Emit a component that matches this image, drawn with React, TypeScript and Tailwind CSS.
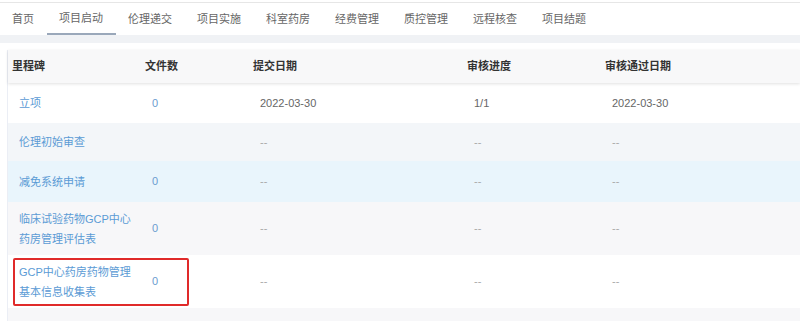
import React from 'react'

const tabs = ['首页', '项目启动', '伦理递交', '项目实施', '科室药房', '经费管理', '质控管理', '远程核查', '项目结题']

type Row = {
  name: string[]
  files: string
  submit: string
  progress: string
  passed: string
  h: string
  bg: string
}

const rows: Row[] = [
  { name: ['立项'], files: '0', submit: '2022-03-30', progress: '1/1', passed: '2022-03-30', h: 'h-[40px]', bg: 'bg-white' },
  { name: ['伦理初始审查'], files: '', submit: '--', progress: '--', passed: '--', h: 'h-[38px]', bg: 'bg-[#f3f6f9]' },
  { name: ['减免系统申请'], files: '0', submit: '--', progress: '--', passed: '--', h: 'h-[41px]', bg: 'bg-[#e9f5fc]' },
  { name: ['临床试验药物GCP中心', '药房管理评估表'], files: '0', submit: '--', progress: '--', passed: '--', h: 'h-[53px]', bg: 'bg-[#f7f7f9]' },
  { name: ['GCP中心药房药物管理', '基本信息收集表'], files: '0', submit: '--', progress: '--', passed: '--', h: 'h-[53px]', bg: 'bg-white' },
  { name: [], files: '', submit: '', progress: '', passed: '', h: 'h-[40px]', bg: 'bg-[#f7f7f9]' },
]

const cols = 'grid grid-cols-[133px_108px_214px_138px_1fr]'

export default function App() {
  return (
    <div className="w-[800px] h-[321px] overflow-hidden bg-white text-[11px] font-['Liberation_Sans','Noto_Sans_CJK_SC',sans-serif]">
      <div className="h-[2px] bg-white" />
      <div className="h-[33px] border-t border-[#e6e6e6] flex">
        {tabs.map((t, i) => (
          <div
            key={t}
            className={`h-full flex items-center px-[12.5px] text-[#666] ${i === 0 ? 'pl-[12px]' : ''} ${i === 1 ? 'border-b-2 border-[#9aa8ba]' : ''}`}
          >
            {t}
          </div>
        ))}
      </div>
      <div className="h-[8px] bg-[#f0f2f5]" />
      <div className="relative pt-[7px] pl-[7px]">
        <div className="border-l border-[#ebeef5]">
          <div className={`${cols} h-[33px] bg-[#f8f8f9] shadow-[0_1px_3px_rgba(0,0,0,0.12)] font-bold text-[#333] items-center relative z-10`}>
            <div className="pl-[4px]">里程碑</div>
            <div className="pl-[4px]">文件数</div>
            <div className="pl-[4px]">提交日期</div>
            <div className="pl-[4px]">审核进度</div>
            <div className="pl-[4px]">审核通过日期</div>
          </div>
          {rows.map((r, i) => (
            <div key={i} className={`${cols} ${r.h} ${r.bg} items-center`}>
              <div className="pl-[11px] text-[#5b9bd5] leading-[20px]">
                {r.name.map((n) => (
                  <div key={n}>{n}</div>
                ))}
              </div>
              <div className="pl-[11px] text-[#6b9bd0]">{r.files}</div>
              <div className={`pl-[11px] ${r.submit === '--' ? 'text-[#aaa]' : 'text-[#666]'}`}>{r.submit}</div>
              <div className={`pl-[11px] ${r.progress === '--' ? 'text-[#aaa]' : 'text-[#666]'}`}>{r.progress}</div>
              <div className={`pl-[11px] ${r.passed === '--' ? 'text-[#aaa]' : 'text-[#666]'}`}>{r.passed}</div>
            </div>
          ))}
        </div>
        <div className="absolute left-[13px] top-[215px] w-[176px] h-[48px] border-2 border-[#e02a2a] rounded-[2px]" />
      </div>
    </div>
  )
}
